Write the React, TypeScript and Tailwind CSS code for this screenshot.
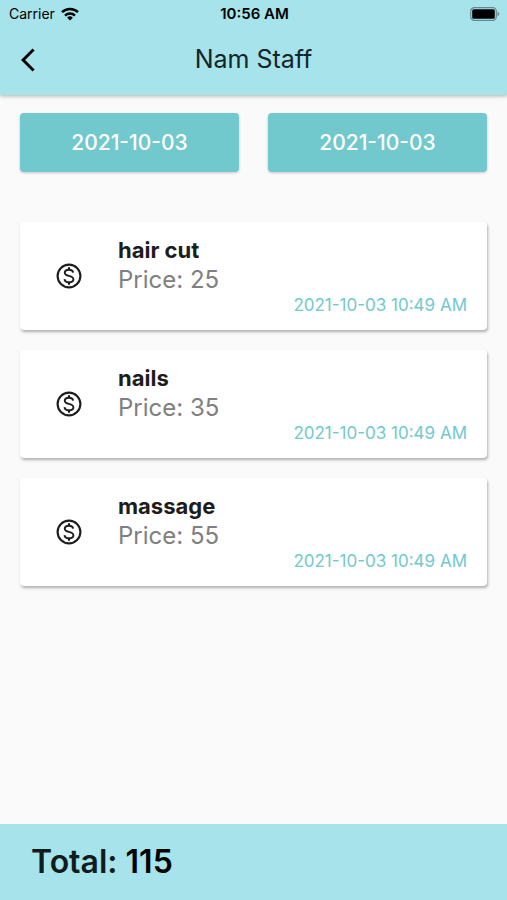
import { MdArrowBackIos } from "react-icons/md";

type Service = {
  name: string;
  price: number;
  date: string;
};

const services: Service[] = [
  { name: "hair cut", price: 25, date: "2021-10-03 10:49 AM" },
  { name: "nails", price: 35, date: "2021-10-03 10:49 AM" },
  { name: "massage", price: 55, date: "2021-10-03 10:49 AM" },
];

const WifiIcon = () => (
  <svg viewBox="0 0 18 14" className="h-[14px] w-[18px]" aria-hidden="true">
    <g fill="none" stroke="black" strokeWidth="2.5">
      <path d="M1 5.2a11.4 11.4 0 0 1 16 0" />
      <path d="M4 8.6a7.2 7.2 0 0 1 10 0" />
    </g>
    <path d="M9 13.6L6.1 10.7a4.2 4.2 0 0 1 5.8 0z" />
  </svg>
);

const BatteryIcon = () => (
  <svg viewBox="0 0 30 14" className="h-[14px] w-[30px]" aria-hidden="true">
    <rect
      x="0.7"
      y="0.7"
      width="25.6"
      height="12.6"
      rx="3.6"
      fill="none"
      stroke="black"
      strokeOpacity="0.4"
      strokeWidth="1.2"
    />
    <rect x="2.2" y="2.2" width="22.6" height="9.6" rx="1.5" />
    <path d="M27.6 4.8c2 .7 2 3.7 0 4.4z" fillOpacity="0.45" />
  </svg>
);

const DollarIcon = () => (
  <svg
    viewBox="0 0 30 30"
    className="size-[30px] shrink-0"
    fill="none"
    stroke="#1c1c1c"
    aria-hidden="true"
  >
    <circle cx="15" cy="15" r="11.4" strokeWidth="2.1" />
    <path
      d="M19.2 11.6c-.3-1.800-1.900-2.900-4.200-2.900-2.500 0-4.200 1.100-4.200 3 0 2 1.700 2.600 4.200 3.200 2.700.7 4.400 1.400 4.400 3.300 0 1.900-1.800 3.100-4.400 3.100-2.600 0-4.300-1.200-4.500-3.200"
      strokeWidth="1.9"
    />
    <path d="M15 6.200v2.600M15 21.200v2.600" strokeWidth="2.200" />
  </svg>
);

const StatusBar = () => (
  <div className="grid h-[27px] grid-cols-3 items-center pr-[7px] pl-[9px] text-[14px] text-black">
    <div className="flex items-center gap-1.5">
      <span>Carrier</span>
      <WifiIcon />
    </div>
    <span className="pt-px text-center text-[15px] font-semibold">
      10:56 AM
    </span>
    <div className="flex justify-end">
      <BatteryIcon />
    </div>
  </div>
);

const DateButton = ({ date }: { date: string }) => (
  <button
    type="button"
    className="h-[59px] flex-1 rounded bg-[#72c9cd] text-[21px] font-medium text-white shadow-[0_1px_3px_rgba(0,0,0,0.2)]"
  >
    {date}
  </button>
);

const ServiceCard = ({ service }: { service: Service }) => (
  <li className="flex items-start rounded bg-white pt-3.5 pr-5 pb-3.5 pl-[34px] shadow-[1px_2px_3px_rgba(0,0,0,0.3)]">
    <div className="flex h-20 items-center">
      <DollarIcon />
    </div>
    <div className="flex flex-1 flex-col pl-[34px]">
      <h2 className="text-[22px] leading-[29px] font-bold text-[#1c1c1c]">
        {service.name}
      </h2>
      <p className="text-[24px] leading-[29px] text-[#808080]">
        Price: {service.price}
      </p>
      <time className="self-end text-[17px] leading-[22px] text-[#72c9cd]">
        {service.date}
      </time>
    </div>
  </li>
);

export default function App() {
  const total = services.reduce((sum, service) => sum + service.price, 0);

  return (
    <div className="flex min-h-screen flex-col bg-[#fafafa] font-[Inter,sans-serif]">
      <header className="bg-[#a7e3ea] shadow-[0_1px_4px_rgba(0,0,0,0.3)]">
        <StatusBar />
        <div className="grid h-[68px] grid-cols-[1fr_auto_1fr] items-center px-[21px] pb-[3px]">
          <button type="button" aria-label="Back" className="w-7">
            <MdArrowBackIos className="size-7" viewBox="0 0 24 24" />
          </button>
          <h1 className="text-[25px] text-[#15252a]">Nam Staff</h1>
        </div>
      </header>

      <main className="flex-1 px-5 pt-[18px]">
        <div className="flex gap-[29px]">
          <DateButton date="2021-10-03" />
          <DateButton date="2021-10-03" />
        </div>
        <ul className="mt-[50px] flex flex-col gap-5">
          {services.map((service) => (
            <ServiceCard key={service.name} service={service} />
          ))}
        </ul>
      </main>

      <footer className="flex h-[76px] items-center bg-[#a7e3ea] px-[31px] text-[32px] font-semibold text-[#101c1e]">
        <p>
          Total: <span className="text-black">{total}</span>
        </p>
      </footer>
    </div>
  );
}
